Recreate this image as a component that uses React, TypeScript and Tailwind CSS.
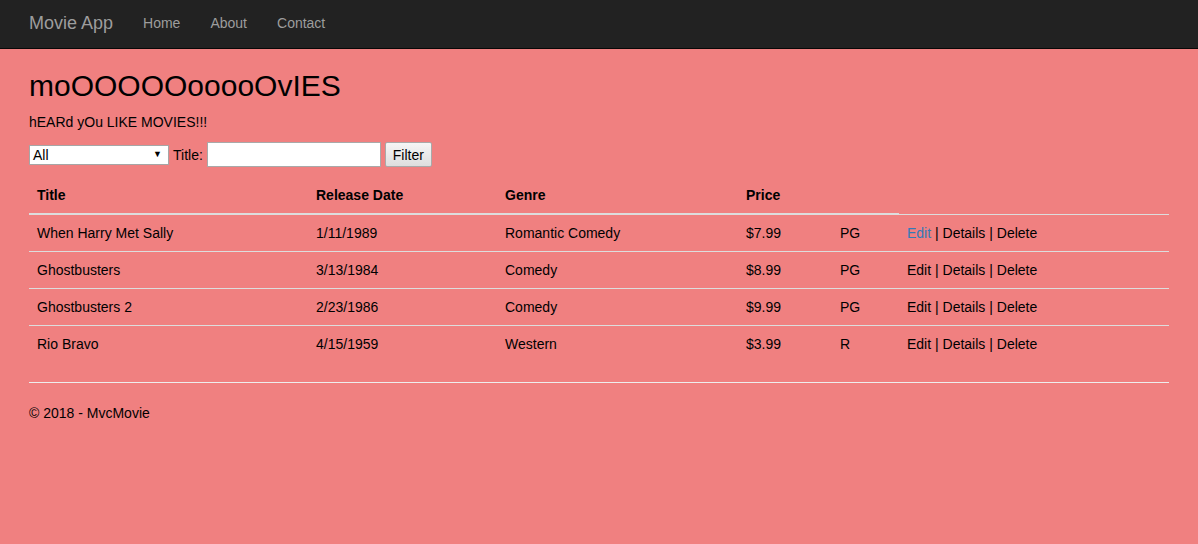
type Movie = {
  title: string
  date: string
  genre: string
  price: string
  rating: string
}

const movies: Movie[] = [
  { title: 'When Harry Met Sally', date: '1/11/1989', genre: 'Romantic Comedy', price: '$7.99', rating: 'PG' },
  { title: 'Ghostbusters', date: '3/13/1984', genre: 'Comedy', price: '$8.99', rating: 'PG' },
  { title: 'Ghostbusters 2', date: '2/23/1986', genre: 'Comedy', price: '$9.99', rating: 'PG' },
  { title: 'Rio Bravo', date: '4/15/1959', genre: 'Western', price: '$3.99', rating: 'R' },
]

function Navbar() {
  return (
    <div className="h-[49px] border-b border-[#080808] bg-[#222]">
      <div className="mx-auto flex h-full w-[1170px] items-center px-[15px] pb-[2px] text-[#9d9d9d]">
        <a href="#" className="pr-[15px] text-[18px] leading-[20px]">
          Movie App
        </a>
        <a href="#" className="px-[15px] text-[14px] leading-[20px]">
          Home
        </a>
        <a href="#" className="px-[15px] text-[14px] leading-[20px]">
          About
        </a>
        <a href="#" className="px-[15px] text-[14px] leading-[20px]">
          Contact
        </a>
      </div>
    </div>
  )
}

function FilterForm() {
  return (
    <div className="flex items-center gap-[4px] text-[14px] leading-[20px]">
      <div className="flex h-[20px] w-[140px] items-center justify-between border border-[#a6a6a6] bg-white pl-[3px] pr-[6px]">
        <span className="text-[14px] leading-[18px] text-black">All</span>
        <span className="text-[9px] leading-none text-black">▼</span>
      </div>
      <span className="text-black">Title:</span>
      <input type="text" className="h-[25px] w-[174px] border border-[#a9a9a9] bg-white" />
      <button className="h-[25px] w-[47px] rounded-[2px] border border-[#a9a9a9] bg-gradient-to-b from-[#f6f6f6] to-[#dedede] text-[14px] text-black">
        Filter
      </button>
    </div>
  )
}

function MovieTable() {
  return (
    <table className="mt-[10px] w-full table-fixed border-collapse text-left text-[14px] leading-[20px] text-black">
      <colgroup>
        <col className="w-[279px]" />
        <col className="w-[189px]" />
        <col className="w-[241px]" />
        <col className="w-[94px]" />
        <col className="w-[67px]" />
        <col />
      </colgroup>
      <thead>
        <tr>
          <th className="border-b-2 border-[#ddd] p-[8px] font-bold">Title</th>
          <th className="border-b-2 border-[#ddd] p-[8px] font-bold">Release Date</th>
          <th className="border-b-2 border-[#ddd] p-[8px] font-bold">Genre</th>
          <th className="border-b-2 border-[#ddd] p-[8px] font-bold">Price</th>
          <th className="border-b-2 border-[#ddd] p-[8px] font-bold"></th>
          <th className="p-[8px]"></th>
        </tr>
      </thead>
      <tbody>
        {movies.map((m, i) => (
          <tr key={m.title}>
            <td className="border-t border-[#ddd] p-[8px]">{m.title}</td>
            <td className="border-t border-[#ddd] p-[8px]">{m.date}</td>
            <td className="border-t border-[#ddd] p-[8px]">{m.genre}</td>
            <td className="border-t border-[#ddd] p-[8px]">{m.price}</td>
            <td className="border-t border-[#ddd] p-[8px]">{m.rating}</td>
            <td className="border-t border-[#ddd] p-[8px]">
              <a href="#" className={i === 0 ? 'text-[#337ab7]' : 'text-black'}>
                Edit
              </a>{' '}
              | <a href="#">Details</a> | <a href="#">Delete</a>
            </td>
          </tr>
        ))}
      </tbody>
    </table>
  )
}

export default function App() {
  return (
    <div className="min-h-[544px] bg-[#f08080] font-['Liberation_Sans',Arial,sans-serif] text-black">
      <Navbar />
      <div className="mx-auto w-[1170px] px-[15px]">
        <h2 className="mt-[20px] mb-[10px] text-[30px] leading-[33px] font-normal">moOOOOOooooOvIES</h2>
        <p className="mb-[10px] text-[14px] leading-[20px]">hEARd yOu LIKE MOVIES!!!</p>
        <FilterForm />
        <MovieTable />
        <hr className="mt-[20px] border-t border-[#eee]" />
        <footer className="pt-[20px] text-[14px] leading-[20px]">
          <p>© 2018 - MvcMovie</p>
        </footer>
      </div>
    </div>
  )
}
